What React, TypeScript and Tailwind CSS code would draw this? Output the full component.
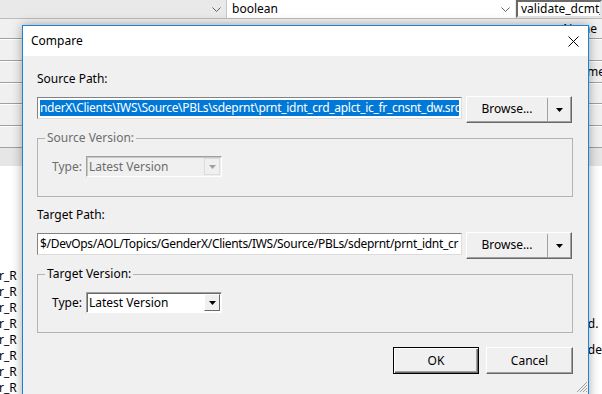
import React from "react";

function Tri({ color = "#000" }: { color?: string }) {
  return (
    <svg width="7" height="4" viewBox="0 0 7 4" className="block">
      <path d="M0 0H7L3.5 4Z" fill={color} />
    </svg>
  );
}

function SplitButton() {
  return (
    <div className="flex h-[27px] w-[106px] border border-t-white border-l-white border-r-[#696969] border-b-[#696969] bg-[#f0f0f0] shadow-[inset_-1px_-1px_0_#a0a0a0]">
      <div className="flex-1 flex items-center justify-center text-[12px] leading-[16px] text-black pb-[1px]">Browse...</div>
      <div className="w-[1px] my-[1px] bg-[#a0a0a0]" />
      <div className="w-[23px] flex items-center justify-center">
        <Tri />
      </div>
    </div>
  );
}

function PathInput({ children }: { children: React.ReactNode }) {
  return (
    <div className="mt-[1px] h-[22px] w-[425px] bg-white border border-t-[#828282] border-l-[#828282] border-r-[#dcdcdc] border-b-[#dcdcdc] flex items-center pl-[2px] pr-[2px]">
      <div className="w-full overflow-hidden whitespace-nowrap flex">{children}</div>
    </div>
  );
}

function Combo({ disabled }: { disabled?: boolean }) {
  return (
    <div
      className={
        disabled
          ? "flex h-[21px] w-[136px] border border-t-[#a0a0a0] border-l-[#a0a0a0] border-r-white border-b-white bg-[#f0f0f0] shadow-[inset_1px_1px_0_#c8c8c8]"
          : "flex h-[21px] w-[136px] border border-t-[#a0a0a0] border-l-[#a0a0a0] border-r-white border-b-white bg-white shadow-[inset_1px_1px_0_#696969]"
      }
    >
      <div
        className={
          disabled
            ? "flex-1 flex items-center pl-[2px] text-[12px] leading-[16px] text-[#6d6d6d]"
            : "flex-1 flex items-center pl-[2px] text-[12px] leading-[16px] text-black"
        }
      >
        Latest Version
      </div>
      <div
        className={
          disabled
            ? "my-[1px] mr-[1px] w-[16px] flex items-center justify-center border border-[#dcdcdc] bg-[#f0f0f0]"
            : "my-[1px] mr-[1px] w-[16px] flex items-center justify-center border border-t-white border-l-white border-r-[#696969] border-b-[#696969] bg-[#f0f0f0]"
        }
      >
        <Tri color={disabled ? "#a0a0a0" : "#000"} />
      </div>
    </div>
  );
}

function Group({ title, disabled }: { title: string; disabled?: boolean }) {
  return (
    <fieldset className="mt-[7px] border border-[#b4b4b4] pb-[19px]">
      <legend
        className={
          disabled
            ? "ml-[7px] px-[2px] text-[12px] leading-[16px] text-[#6d6d6d]"
            : "ml-[7px] px-[2px] text-[12px] leading-[16px] text-black"
        }
      >
        {title}
      </legend>
      <div className="mt-[10px] pl-[14px] flex items-center">
        <span
          className={
            disabled
              ? "w-[34px] text-[12px] leading-[16px] text-[#6d6d6d]"
              : "w-[34px] text-[12px] leading-[16px] text-black"
          }
        >
          Type:
        </span>
        <Combo disabled={disabled} />
      </div>
    </fieldset>
  );
}

function Btn({ label, def }: { label: string; def?: boolean }) {
  return (
    <div
      className={
        def
          ? "h-[27px] w-[86px] border border-black bg-[#f0f0f0] shadow-[inset_1px_1px_0_white,inset_-1px_-1px_0_#696969,inset_-2px_-2px_0_#a0a0a0] flex items-center justify-center text-[12px] leading-[16px] text-black"
          : "h-[27px] w-[87px] border border-t-white border-l-white border-r-[#696969] border-b-[#696969] bg-[#f0f0f0] shadow-[inset_-1px_-1px_0_#a0a0a0] flex items-center justify-center text-[12px] leading-[16px] text-black"
      }
    >
      {label}
    </div>
  );
}

function BgRow({ h, right, rightClass }: { h: string; right?: string; rightClass?: string }) {
  return (
    <div className={`${h} flex items-center justify-end border-b border-[#a0a0a0] shadow-[0_1px_0_white] text-[12px] text-black overflow-hidden`}>
      {right ? <span className={rightClass}>{right}</span> : null}
    </div>
  );
}

export default function App() {
  const rowsLeft = [0, 1, 2, 3, 4, 5, 6, 7];
  return (
    <div className="relative w-[602px] h-[394px] overflow-hidden bg-white font-['Noto_Sans',sans-serif]">
      {/* background application */}
      <div className="flex flex-col">
        <div className="h-[19px] flex bg-[#e9e9e9] border-b border-[#bcbcbc]">
          <div className="w-[226px] flex items-center justify-end pr-[5px]">
            <svg width="9" height="5" viewBox="0 0 9 5">
              <path d="M0.5 0.5L4.5 4.5L8.5 0.5" stroke="#606060" fill="none" />
            </svg>
          </div>
          <div className="w-[289px] bg-white border-l border-[#c8c8c8] flex items-center justify-between pl-[5px] pr-[5px] text-[12px] text-black">
            <span>boolean</span>
            <svg width="9" height="5" viewBox="0 0 9 5">
              <path d="M0.5 0.5L4.5 4.5L8.5 0.5" stroke="#606060" fill="none" />
            </svg>
          </div>
          <div className="flex-1 ml-[1px] bg-white border-2 border-t-[#696969] border-l-[#696969] border-r-[#e3e3e3] border-b-[#e3e3e3] flex items-center pl-[3px] text-[12px] text-black whitespace-nowrap overflow-hidden">
            <span>validate_dcmt_dw</span>
          </div>
        </div>
        <div className="bg-[#f0f0f0] flex flex-col">
          <BgRow h="h-[20px]" right="Name" rightClass="pr-[5px] text-[12px]" />
          <BgRow h="h-[22px]" />
          <BgRow h="h-[22px]" right="me" rightClass="-mr-[3px] text-[12px]" />
          <BgRow h="h-[21px]" />
          <BgRow h="h-[22px]" />
          <BgRow h="h-[22px]" />
          <div className="h-[19px] bg-[#e6e6e6] border-b border-white" />
        </div>
        <div className="flex justify-between">
          <div className="pt-[101px] flex flex-col">
            {rowsLeft.map((i) => (
              <div key={i} className="h-[16px] leading-[16px] text-[12px] text-black -ml-[1px]">
                r_R
              </div>
            ))}
          </div>
          <div className="pt-[149px] flex flex-col">
            <div className="h-[16px] leading-[16px] text-[12px] text-black">d.</div>
            <div className="h-[10px]" />
            <div className="h-[16px] leading-[16px] text-[12px] text-black">de</div>
          </div>
        </div>
      </div>

      {/* dialog */}
      <div className="absolute left-[22px] top-[25px] w-[567px] h-[400px] border border-[#1883d7] bg-[#f0f0f0] shadow-[0_0_10px_rgba(0,0,0,0.35)] flex flex-col">
        <div className="h-[30px] bg-white flex items-center justify-between pl-[8px] pr-[9px]">
          <span className="text-[12px] leading-[16px] text-black">Compare</span>
          <svg width="11" height="11" viewBox="0 0 11 11">
            <path d="M0.5 0.5L10.5 10.5M10.5 0.5L0.5 10.5" stroke="#000" strokeWidth="1" />
          </svg>
        </div>
        <div className="relative flex-1 flex flex-col pl-[14px] pr-[15px]">
          <div className="mt-[15px] text-[12px] leading-[16px] text-black">Source Path:</div>
          <div className="mt-[9px] flex items-start gap-[4px]">
            <PathInput>
              <span className="bg-[#0078d7] text-white text-[12px] leading-[16px] tracking-[-0.3px]">
                nderX\Clients\IWS\Source\PBLs\sdeprnt\prnt_idnt_crd_aplct_ic_fr_cnsnt_dw.src
              </span>
            </PathInput>
            <SplitButton />
          </div>
          <Group title="Source Version:" disabled />
          <div className="mt-[10px] text-[12px] leading-[16px] text-black">Target Path:</div>
          <div className="mt-[9px] flex items-start gap-[4px]">
            <PathInput>
              <span className="text-black text-[12px] leading-[16px] tracking-[-0.3px]">
                $/DevOps/AOL/Topics/GenderX/Clients/IWS/Source/PBLs/sdeprnt/prnt_idnt_cr
              </span>
            </PathInput>
            <SplitButton />
          </div>
          <Group title="Target Version:" />
          <div className="mt-[14px] flex justify-end gap-[7px]">
            <Btn label="OK" def />
            <Btn label="Cancel" />
          </div>
          <div className="absolute left-[552px] top-[324px]">
            <svg width="13" height="13" viewBox="0 0 13 13">
              <path d="M12 2L2 12M12 5L5 12M12 8L8 12M12 11L11 12" stroke="#a0a0a0" strokeWidth="1" />
            </svg>
          </div>
        </div>
      </div>
    </div>
  );
}
